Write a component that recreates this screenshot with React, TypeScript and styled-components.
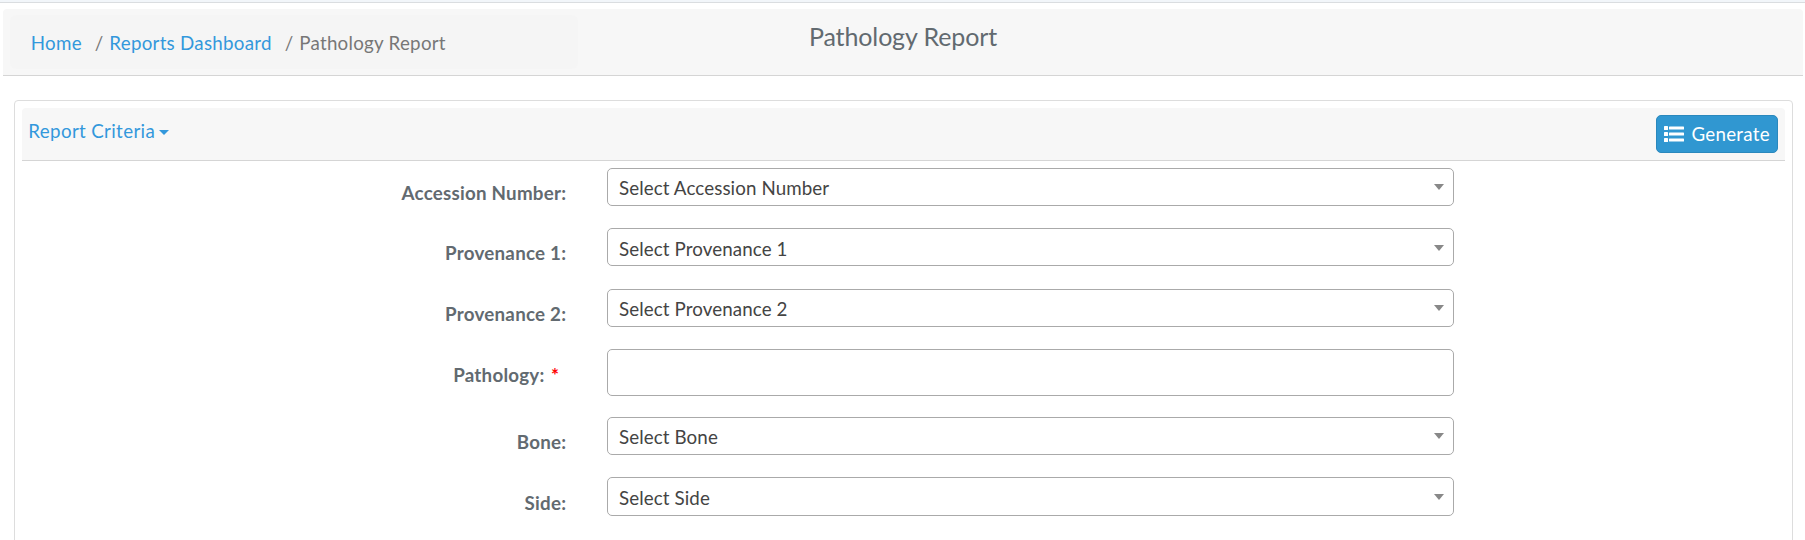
import React from "react";
import styled, { createGlobalStyle } from "styled-components";

const Global = createGlobalStyle`
  * { box-sizing: border-box; }
  body {
    margin: 0;
    background: #fff;
    color: #626a70;
    font: 18.75px/26px Lato, "Liberation Sans", sans-serif;
    overflow: hidden;
  }
`;

const Page = styled.div`
  height: 540px;
  display: flex;
  flex-direction: column;
  overflow: hidden;
`;

const TopEdge = styled.div`
  flex: none;
  height: 3px;
  background: #f2f6fa;
  border-bottom: 1px solid #dadde0;
`;

const PageHeader = styled.header`
  flex: none;
  display: grid;
  grid-template-columns: 568px 1fr 568px;
  margin: 6px 2px 0 3px;
  height: 67px;
  padding: 6px 7px;
  background: #f7f7f7;
  border-bottom: 1px solid #d5d5d5;
  border-radius: 4px 4px 0 0;
`;

const Breadcrumb = styled.nav`
  display: flex;
  height: 54px;
  padding: 15px 20.8px;
  background: #f5f5f5;
  border-radius: 6px;
  letter-spacing: 0.26px;
  white-space: nowrap;
`;

const Link = styled.a`
  color: #3398dc;
  text-decoration: none;
`;

const Divider = styled.span`
  width: 14.5px;
  margin-left: 13px;
  color: #777;
`;

const Current = styled.span`
  color: #777;
`;

const Title = styled.h1`
  margin: 5px 0 0;
  font-size: 25px;
  font-weight: 400;
  letter-spacing: -0.12px;
  line-height: 32px;
  text-align: center;
`;

const Card = styled.section`
  flex: none;
  height: 460px;
  margin: 24px 12px 0 14px;
  padding: 7px 7px 0;
  border: 1px solid #ddd;
  border-radius: 4px;
`;

const CardHeader = styled.div`
  display: flex;
  justify-content: space-between;
  height: 53px;
  padding: 7px 7px 0 6.3px;
  background: #f7f7f7;
  border-bottom: 1px solid #d5d5d5;
  border-radius: 4px 4px 0 0;
`;

const Caret = styled.span<{ $color: string }>`
  border: 5px solid transparent;
  border-top: 6px solid ${(p) => p.$color};
  border-bottom: 0;
`;

const Toggle = styled.a`
  display: flex;
  align-items: center;
  gap: 4px;
  height: 32px;
  color: #3398dc;
  letter-spacing: 0.35px;

  ${Caret} {
    margin-top: 3px;
    border-top-width: 5px;
  }
`;

const Button = styled.button`
  display: flex;
  align-items: center;
  gap: 7.5px;
  width: 122px;
  height: 38px;
  padding: 0 7px;
  color: #fff;
  background: #3097d1;
  border: 1px solid #2a88bd;
  border-radius: 5px;
  font: inherit;
  letter-spacing: 0.25px;
`;

const Form = styled.form`
  padding-top: 7px;
`;

const Row = styled.div<{ $height: number }>`
  display: grid;
  grid-template-columns: 544.3px 847px;
  column-gap: 40.7px;
  height: ${(p) => p.$height}px;
`;

const Label = styled.label<{ $top: number }>`
  padding-top: ${(p) => p.$top}px;
  font-weight: 700;
  letter-spacing: 0.24px;
  text-align: right;
`;

const Required = styled.span`
  margin: 0 7px 0 6.5px;
  color: #f00;
`;

const Field = styled.div<{ $height: number; $shift: number }>`
  display: flex;
  justify-content: space-between;
  align-items: flex-start;
  height: ${(p) => p.$height}px;
  padding: ${(p) => 6 + p.$shift}px 9px 0 11px;
  color: #444;
  border: 1px solid #aaa;
  border-radius: 5px;
  letter-spacing: 0.1px;
`;

const Arrow = styled(Caret)`
  margin-top: 9px;
`;

type FieldData = {
  label: string;
  text?: string;
  row: number;
  height: number;
  top: number;
  shift: number;
};

const fields: FieldData[] = [
  { label: "Accession Number:", text: "Select Accession Number", row: 60, height: 38, top: 12, shift: 0 },
  { label: "Provenance 1:", text: "Select Provenance 1", row: 61, height: 38, top: 12, shift: 1 },
  { label: "Provenance 2:", text: "Select Provenance 2", row: 60, height: 38, top: 12, shift: 0 },
  { label: "Pathology:", row: 68, height: 47, top: 13, shift: 0 },
  { label: "Bone:", text: "Select Bone", row: 60, height: 38, top: 12, shift: 0 },
  { label: "Side:", text: "Select Side", row: 60, height: 39, top: 13, shift: 1 },
];

const ListIcon = () => (
  <svg width="20" height="16" viewBox="0 0 20 16" fill="#fff">
    {[0, 6, 12].map((y) => (
      <React.Fragment key={y}>
        <rect x="0" y={y} width="4" height="4" rx="0.6" />
        <rect x="5" y={y + 0.5} width="15" height="3" rx="0.6" />
      </React.Fragment>
    ))}
  </svg>
);

export default function App() {
  return (
    <Page>
      <Global />
      <TopEdge />
      <PageHeader>
        <Breadcrumb>
          <Link>Home</Link>
          <Divider>/</Divider>
          <Link>Reports Dashboard</Link>
          <Divider>/</Divider>
          <Current>Pathology Report</Current>
        </Breadcrumb>
        <Title>Pathology Report</Title>
      </PageHeader>
      <Card>
        <CardHeader>
          <Toggle>
            Report Criteria
            <Caret $color="#3398dc" />
          </Toggle>
          <Button type="button">
            <ListIcon />
            Generate
          </Button>
        </CardHeader>
        <Form>
          {fields.map((f) => (
            <Row key={f.label} $height={f.row}>
              <Label $top={f.top}>
                {f.label}
                {!f.text && <Required>*</Required>}
              </Label>
              <Field $height={f.height} $shift={f.shift}>
                {f.text}
                {f.text && <Arrow $color="#888" />}
              </Field>
            </Row>
          ))}
        </Form>
      </Card>
    </Page>
  );
}
